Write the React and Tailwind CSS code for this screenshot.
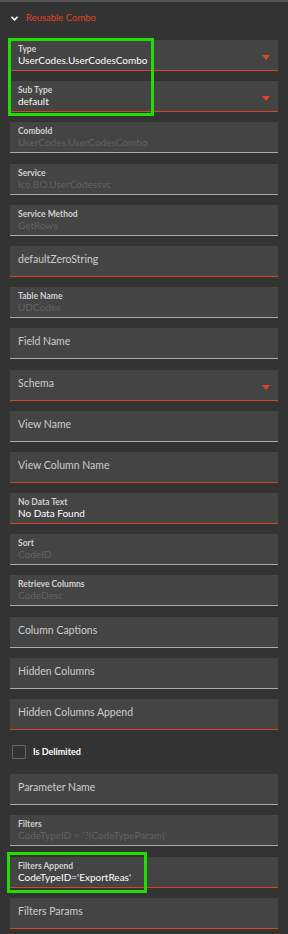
import React from "react";

const fields = [
  { label: "Type", value: "UserCodes.UserCodesCombo", filled: true, red: true, select: true },
  { label: "Sub Type", value: "default", filled: true, red: true, select: true },
  { label: "ComboId", value: "UserCodes.UserCodesCombo", red: false },
  { label: "Service", value: "Ice.BO.UserCodessvc", red: false },
  { label: "Service Method", value: "GetRows", red: false },
  { label: "defaultZeroString", red: true },
  { label: "Table Name", value: "UDCodes", red: false },
  { label: "Field Name", red: false },
  { label: "Schema", red: true, select: true },
  { label: "View Name", red: false },
  { label: "View Column Name", red: true },
  { label: "No Data Text", value: "No Data Found", filled: true, red: true },
  { label: "Sort", value: "CodeID", red: false },
  { label: "Retrieve Columns", value: "CodeDesc", red: false },
  { label: "Column Captions", red: false },
  { label: "Hidden Columns", red: false },
  { label: "Hidden Columns Append", red: true },
];

const fields2 = [
  { label: "Parameter Name", red: false },
  { label: "Filters", value: "CodeTypeID = '?{CodeTypeParam}'", red: false },
  { label: "Filters Append", value: "CodeTypeID='ExportReas'", filled: true, red: true },
  { label: "Filters Params", red: true },
];

const Field = ({ label, value, filled, red, select }) => {
  return (
    <div
      className={`relative h-[31px] bg-[#444444] border-b ${
        red ? "border-[#d8432c]" : "border-[#aaaaaa]"
      } pl-[8px]`}
    >
      {value !== undefined ? (
        <div className="pt-[4px] leading-none">
          <p className="text-[8.5px] font-bold text-[#d0d0d0] leading-[10px]">{label}</p>
          <p
            className={`text-[10px] leading-[13px] whitespace-nowrap ${
              filled ? "text-white" : "text-[#626262]"
            }`}
          >
            {value}
          </p>
        </div>
      ) : (
        <p className="pt-[7px] text-[10.5px] leading-[13px] text-[#cccccc]">{label}</p>
      )}
      {select && (
        <div className="absolute right-[8px] top-[15px] w-0 h-0 border-l-[4px] border-r-[4px] border-t-[5px] border-l-transparent border-r-transparent border-t-[#e0432b]" />
      )}
    </div>
  );
};

const App = () => {
  return (
    <div
      className="w-[288px] h-[934px] bg-[#333333] relative overflow-hidden"
      style={{ fontFamily: 'Lato, "Open Sans", sans-serif' }}
    >
      <div className="h-[2px] bg-[#555555]" />
      <div className="flex items-center h-[33px] pl-[11px]">
        <svg width="7" height="5" viewBox="0 0 7 5" className="mr-[8px]">
          <path d="M0.5 0.8 L3.5 3.8 L6.5 0.8" stroke="#ffffff" strokeWidth="1.6" fill="none" />
        </svg>
        <span className="text-[9.5px] text-[#e0432b]">Reusable Combo</span>
      </div>
      <div className="flex flex-col gap-[10.2px] px-[10px] pt-[5px]">
        {fields.map((f) => (
          <Field key={f.label} {...f} />
        ))}
      </div>
      <div className="flex items-center h-[44px] pl-[12px]">
        <div className="w-[14px] h-[14px] border border-[#666666] rounded-[1px]" />
        <span className="ml-[7px] text-[9px] font-bold text-white">Is Delimited</span>
      </div>
      <div className="flex flex-col gap-[10.3px] px-[10px]">
        {fields2.map((f) => (
          <Field key={f.label} {...f} />
        ))}
      </div>
      <div className="absolute left-[8px] top-[38px] w-[146px] h-[78px] border-[3px] border-[#22dd00]" />
      <div className="absolute left-[7px] top-[852px] w-[140px] h-[41px] border-[3px] border-[#22dd00]" />
    </div>
  );
};

export default App;
